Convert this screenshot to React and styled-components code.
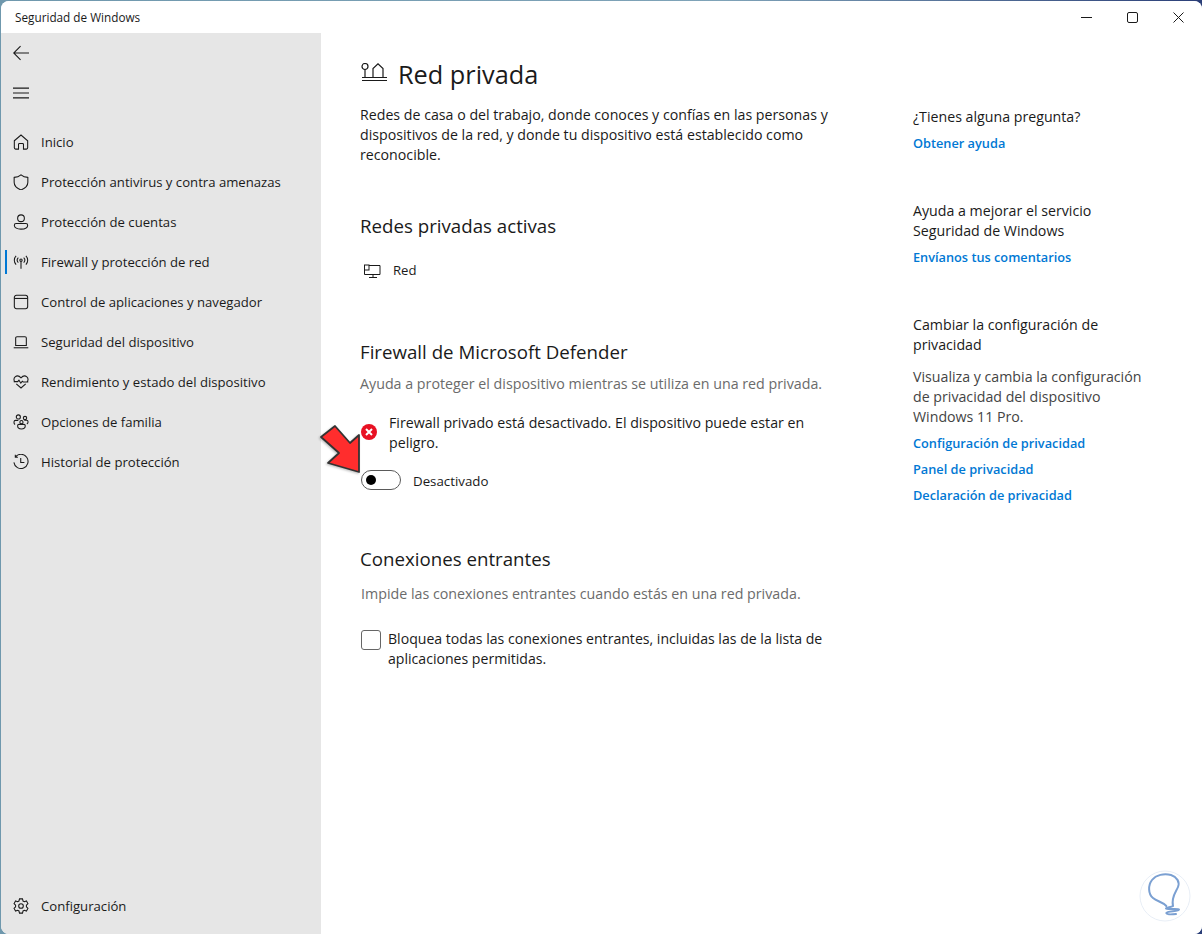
import React from 'react';
import styled, { createGlobalStyle } from 'styled-components';

const GlobalStyle = createGlobalStyle`
    html, body {
        margin: 0;
        padding: 0;
        width: 1202px;
        height: 934px;
        overflow: hidden;
        background: linear-gradient(90deg, #6f98ad 0%, #7fa3b8 60%, #2b3f78 100%);
    }
    * {
        box-sizing: border-box;
    }
`;

const FONT = `"Open Sans", "Noto Sans", "Liberation Sans", sans-serif`;

const navItems = [
    { label: 'Inicio', icon: 'home' },
    { label: 'Protección antivirus y contra amenazas', icon: 'shield' },
    { label: 'Protección de cuentas', icon: 'user' },
    { label: 'Firewall y protección de red', icon: 'antenna', active: true },
    { label: 'Control de aplicaciones y navegador', icon: 'browser' },
    { label: 'Seguridad del dispositivo', icon: 'laptop' },
    { label: 'Rendimiento y estado del dispositivo', icon: 'heart' },
    { label: 'Opciones de familia', icon: 'family' },
    { label: 'Historial de protección', icon: 'history' },
];

const iconPaths = {
    home: (
        <path d="M1.5 7.6 9 1.2l7.5 6.4v8a1.4 1.4 0 0 1-1.4 1.4h-3.3v-5.300a1 1 0 0 0-1-1H7.200a1 1 0 0 0-1 1V17H2.900a1.400 1.400 0 0 1-1.400-1.400z" />
    ),
    shield: (
        <path d="M9 .9c2.200 1.800 4.700 2.700 7.700 2.900v5.500c0 4-2.500 6.700-7.700 8.600-5.200-1.900-7.700-4.600-7.700-8.600V3.800C4.300 3.600 6.800 2.700 9 .9z" />
    ),
    user: (
        <>
            <circle cx="9" cy="4.800" r="3.800" />
            <path d="M1.500 12.600c0-1.100.9-1.900 2-1.900h11c1.100 0 2 .8 2 1.900 0 3-3.200 4.400-7.500 4.400s-7.500-1.400-7.500-4.400z" />
        </>
    ),
    antenna: (
        <>
            <circle cx="9" cy="7" r="1.300" />
            <path d="M9 8.300V16.500M6 4.200a4 4 0 0 0 0 5.600M12 4.200a4 4 0 0 1 0 5.600M3.500 2a7.200 7.200 0 0 0 0 10M14.500 2a7.200 7.200 0 0 1 0 10" />
        </>
    ),
    browser: (
        <>
            <rect x="1.500" y="1.500" width="15" height="15" rx="2.500" />
            <path d="M1.500 5h15" />
        </>
    ),
    laptop: (
        <>
            <path d="M3 13V4.500A1.500 1.500 0 0 1 4.500 3h9A1.500 1.500 0 0 1 15 4.500V13z" />
            <path d="M.8 15.500h16.400" />
        </>
    ),
    heart: (
        <path d="M2.400 9.200C.6 7.400.7 4.600 2.400 3.200c1.900-1.500 4.600-1.100 6.600 1.100 2-2.200 4.700-2.600 6.600-1.100 1.700 1.400 1.800 4.200 0 6M.8 8.600h4.500l1.400-1.700 2.100 3.400 1.700-2.200.9.800h5.800M3.700 11 9 15.700l5.300-4.700" />
    ),
    family: (
        <>
            <circle cx="6" cy="3.300" r="2.300" />
            <circle cx="13.500" cy="4.600" r="1.900" />
            <circle cx="9.500" cy="9.200" r="1.800" />
            <path d="M2.300 11.800C.5 10.500.7 7.200 2.800 7.200H6M15.600 11.200c2-1.200 1.700-4.100-.3-4.100h-2.600M5.200 13.200c0-1 .7-1.500 1.500-1.500h5.600c.8 0 1.500.5 1.500 1.500 0 2.400-2.200 3.600-4.300 3.600s-4.300-1.200-4.300-3.600z" />
        </>
    ),
    history: (
        <>
            <path d="M2.800 3.200A8 8 0 1 1 1 9.500M2.600.8v2.800h2.900" />
            <path d="M8.700 4.500v5.100h4.100" />
        </>
    ),
    gear: (
        <>
            <circle cx="9" cy="9" r="2.600" />
            <path d="M7.300 1h3.400l.6 2.400 1.500.8 2.300-.8 1.700 2.900-1.700 1.800v1.800l1.700 1.800-1.700 2.900-2.300-.8-1.500.8-.6 2.400H7.300l-.6-2.400-1.500-.8-2.300.8-1.700-2.900 1.700-1.800V8.100L1.200 6.300 2.900 3.400l2.300.8 1.500-.8z" />
        </>
    ),
};

const Icon = ({ name }) => (
    <NavIcon viewBox="0 0 18 18">{iconPaths[name]}</NavIcon>
);

const App = () => {
    return (
        <>
            <GlobalStyle />
            <Window>
                <TitleBar>
                    <TitleText>Seguridad de Windows</TitleText>
                    <WindowButtons>
                        <CaptionIcon viewBox="0 0 11 11"><path d="M0 5.500h11" /></CaptionIcon>
                        <CaptionIcon viewBox="0 0 11 11"><rect x=".5" y=".5" width="10" height="10" rx="1.500" /></CaptionIcon>
                        <CaptionIcon viewBox="0 0 11 11"><path d="M.5.5l10 10M10.500.5l-10 10" /></CaptionIcon>
                    </WindowButtons>
                </TitleBar>
                <Body>
                    <Sidebar>
                        <TopButton>
                            <NavIcon viewBox="0 0 18 18"><path d="M18 9H.8M8.500 1.300.8 9l7.700 7.700" /></NavIcon>
                        </TopButton>
                        <MenuButton>
                            <NavIcon viewBox="0 0 18 18"><path d="M0 3.500h18M0 9h18M0 14.500h18" /></NavIcon>
                        </MenuButton>
                        <NavList>
                            {navItems.map((item) => (
                                <NavItem key={item.label} $active={item.active}>
                                    <Icon name={item.icon} />
                                    <NavLabel>{item.label}</NavLabel>
                                </NavItem>
                            ))}
                        </NavList>
                        <SidebarFooter>
                            <NavItem>
                                <Icon name="gear" />
                                <NavLabel>Configuración</NavLabel>
                            </NavItem>
                        </SidebarFooter>
                    </Sidebar>

                    <Main>
                        <Content>
                            <PageHeader>
                                <HeaderIcon viewBox="0 0 27 22">
                                    <circle cx="5" cy="3.500" r="3" />
                                    <path d="M5 6.500V14.500M13 14.500V5.500L18 .8 23 5.500V14.500M2 14.500h25M2 17.500h25" />
                                </HeaderIcon>
                                <PageTitle>Red privada</PageTitle>
                            </PageHeader>
                            <Paragraph>
                                Redes de casa o del trabajo, donde conoces y confías en las personas y dispositivos de la red, y donde tu dispositivo está establecido como reconocible.
                            </Paragraph>

                            <ActiveSection>
                                <SectionTitle>Redes privadas activas</SectionTitle>
                                <NetworkRow>
                                    <NetworkIcon viewBox="0 0 18 16">
                                        <path d="M6 3.500h11v9H4M1.500 8v4.500H4M10 12.500v3M6 15.500h8" />
                                        <rect x="1.500" y="3" width="4.500" height="5" />
                                    </NetworkIcon>
                                    <NetworkName>Red</NetworkName>
                                </NetworkRow>
                            </ActiveSection>

                            <FirewallSection>
                                <SectionTitle>Firewall de Microsoft Defender</SectionTitle>
                                <Hint>Ayuda a proteger el dispositivo mientras se utiliza en una red privada.</Hint>
                                <AlertRow>
                                    <AlertIcon viewBox="0 0 16 16">
                                        <circle cx="8" cy="8" r="8" fill="#e81123" />
                                        <path d="M5 5l6 6M11 5l-6 6" stroke="#fff" strokeWidth="2" />
                                    </AlertIcon>
                                    <AlertText>Firewall privado está desactivado. El dispositivo puede estar en peligro.</AlertText>
                                </AlertRow>
                                <ToggleRow>
                                    <Toggle><ToggleKnob /></Toggle>
                                    <ToggleLabel>Desactivado</ToggleLabel>
                                    <Arrow viewBox="0 0 42 50">
                                        <path d="M1 13 15 2 30 19 39 11 39 48 8 39 19 29 Z" fill="#ff2d2d" stroke="#333" strokeWidth="1.800" strokeLinejoin="round" />
                                    </Arrow>
                                </ToggleRow>
                            </FirewallSection>

                            <IncomingSection>
                                <SectionTitle>Conexiones entrantes</SectionTitle>
                                <IncomingHint>Impide las conexiones entrantes cuando estás en una red privada.</IncomingHint>
                                <CheckRow>
                                    <CheckBox />
                                    <CheckText>Bloquea todas las conexiones entrantes, incluidas las de la lista de aplicaciones permitidas.</CheckText>
                                </CheckRow>
                            </IncomingSection>
                        </Content>

                        <Aside>
                            <AsideBlock>
                                <AsideText>¿Tienes alguna pregunta?</AsideText>
                                <AsideLink>Obtener ayuda</AsideLink>
                            </AsideBlock>
                            <AsideBlock>
                                <AsideText>Ayuda a mejorar el servicio Seguridad de Windows</AsideText>
                                <AsideLink>Envíanos tus comentarios</AsideLink>
                            </AsideBlock>
                            <AsideBlock>
                                <AsideText>Cambiar la configuración de privacidad</AsideText>
                                <AsideNote>Visualiza y cambia la configuración de privacidad del dispositivo Windows 11 Pro.</AsideNote>
                                <AsideLink>Configuración de privacidad</AsideLink>
                                <AsideLink>Panel de privacidad</AsideLink>
                                <AsideLink>Declaración de privacidad</AsideLink>
                            </AsideBlock>
                        </Aside>

                        <Watermark viewBox="0 0 52 52">
                            <circle cx="26" cy="26" r="25" fill="none" stroke="#e8eef6" strokeWidth="1" />
                            <path d="M27.300 36C24 32 18 31.500 14 28 9 24 9 15 13 10 17 5 25 3 32 5 38 7 41 12 39 17 37 22 32 27 34 36 32 37.500 27 37 27 38.500 28 40 39 38 40 39.500 40 41.500 28 41 27.300 43 28 45 33 44.500 37 44" fill="none" stroke="#7ba0d2" strokeWidth="2" strokeLinecap="round" />
                        </Watermark>
                    </Main>
                </Body>
            </Window>
        </>
    );
};

export default App;

const Window = styled.div`
    position: relative;
    display: flex;
    flex-direction: column;
    width: 1201px;
    height: 933px;
    margin: 1px 0 0 1px;
    overflow: hidden;
    border-radius: 8px;
    background: #fff;
    font-family: ${FONT};
    color: #1a1a1a;
`;

const TitleBar = styled.div`
    display: flex;
    flex: none;
    align-items: center;
    justify-content: space-between;
    height: 32px;
    padding-left: 14px;
    background: #fff;
`;

const TitleText = styled.span`
    font-size: 11.75px;
    color: #1a1a1a;
`;

const WindowButtons = styled.div`
    display: flex;
    gap: 35px;
    align-items: center;
    padding-right: 18px;
`;

const CaptionIcon = styled.svg`
    width: 11px;
    height: 11px;
    fill: none;
    stroke: #1a1a1a;
    stroke-width: 1;
`;

const Body = styled.div`
    display: flex;
    flex: 1;
    min-height: 0;
`;

const Sidebar = styled.nav`
    display: flex;
    flex: none;
    flex-direction: column;
    width: 320px;
    background: #e6e6e6;
`;

const TopButton = styled.div`
    display: flex;
    align-items: center;
    height: 40px;
    padding-left: 12px;
`;

const MenuButton = styled(TopButton)`
    margin-bottom: 9px;
`;

const NavList = styled.div`
    display: flex;
    flex-direction: column;
`;

const NavItem = styled.div`
    position: relative;
    display: flex;
    gap: 12px;
    align-items: center;
    height: 40px;
    padding-left: 12px;

    ${(p) => p.$active && `
        &::before {
            content: '';
            position: absolute;
            left: 4px;
            top: 8px;
            width: 2px;
            height: 24px;
            background: #0078d4;
        }
    `}
`;

const NavIcon = styled.svg`
    flex: none;
    width: 16px;
    height: 16px;
    fill: none;
    stroke: #1a1a1a;
    stroke-width: 1.2;
`;

const NavLabel = styled.span`
    font-size: 13.15px;
    color: #1a1a1a;
    white-space: nowrap;
`;

const SidebarFooter = styled.div`
    margin-top: auto;
    padding-bottom: 8px;
`;

const Main = styled.main`
    position: relative;
    display: flex;
    flex: 1;
    padding: 21px 0 0 39px;
    background: #fff;
`;

const Content = styled.div`
    width: 480px;
    flex: none;
`;

const PageHeader = styled.div`
    display: flex;
    gap: 11px;
    align-items: center;
    height: 40px;
    margin-bottom: 11px;
`;

const HeaderIcon = styled.svg`
    width: 27px;
    height: 22px;
    fill: none;
    stroke: #1a1a1a;
    stroke-width: 1.2;
`;

const PageTitle = styled.h1`
    margin: 0;
    font-size: 25.3px;
    font-weight: 400;
    color: #1a1a1a;
`;

const Paragraph = styled.p`
    margin: 0;
    font-size: 14.2px;
    line-height: 20px;
    color: #1a1a1a;
`;

const ActiveSection = styled.section`
    margin-top: 47px;
`;

const SectionTitle = styled.h2`
    margin: 0;
    font-size: 18.7px;
    line-height: 28px;
    font-weight: 400;
    color: #1a1a1a;
`;

const NetworkRow = styled.div`
    display: flex;
    gap: 12px;
    align-items: center;
    height: 20px;
    margin-top: 20px;
    padding-left: 3px;
`;

const NetworkIcon = styled.svg`
    width: 18px;
    height: 16px;
    fill: none;
    stroke: #1a1a1a;
    stroke-width: 1;
`;

const NetworkName = styled.span`
    font-size: 13.15px;
`;

const FirewallSection = styled.section`
    margin-top: 58px;
`;

const Hint = styled.p`
    margin: 8px 0 0;
    font-size: 14.25px;
    line-height: 20px;
    color: #6b6b6b;
`;

const AlertRow = styled.div`
    display: flex;
    gap: 12px;
    margin-top: 19px;
`;

const AlertIcon = styled.svg`
    flex: none;
    width: 16px;
    height: 16px;
    margin: 11px 0 0 1px;
`;

const AlertText = styled.p`
    margin: 0;
    font-size: 14.2px;
    line-height: 20px;
`;

const ToggleRow = styled.div`
    position: relative;
    display: flex;
    gap: 12px;
    align-items: center;
    height: 22px;
    margin-top: 16px;
    padding-left: 1px;
`;

const Toggle = styled.div`
    display: flex;
    align-items: center;
    width: 40px;
    height: 20px;
    padding-left: 4px;
    border: 1px solid #5a5a5a;
    border-radius: 10px;
    background: #fff;
`;

const ToggleKnob = styled.div`
    width: 10px;
    height: 10px;
    border-radius: 50%;
    background: #000;
`;

const ToggleLabel = styled.span`
    font-size: 13.3px;
    padding-top: 2px;
`;

const Arrow = styled.svg`
    position: absolute;
    left: -40px;
    top: -45px;
    width: 42px;
    height: 50px;
    filter: drop-shadow(-1px 1px 1px rgba(0, 0, 0, 0.25));
`;

const IncomingSection = styled.section`
    margin-top: 54px;
`;

const IncomingHint = styled(Hint)`
    margin-top: 11px;
    padding-left: 1px;
`;

const CheckRow = styled.div`
    display: flex;
    gap: 7px;
    margin-top: 25px;
    padding-left: 1px;
`;

const CheckBox = styled.div`
    flex: none;
    width: 20px;
    height: 20px;
    margin-top: 1px;
    border: 1px solid #666;
    border-radius: 3px;
    background: #fff;
`;

const CheckText = styled(AlertText)`
    font-size: 14.1px;
`;

const Aside = styled.aside`
    display: flex;
    flex-direction: column;
    gap: 45px;
    width: 235px;
    margin-left: 73px;
    padding-top: 53px;
`;

const AsideBlock = styled.div`
    display: flex;
    flex-direction: column;
`;

const AsideText = styled.div`
    font-size: 14.2px;
    line-height: 20px;
    margin-bottom: 3px;
`;

const AsideNote = styled.div`
    font-size: 14.2px;
    line-height: 20px;
    color: #444;
    margin: 9px 0 3px;
`;

const AsideLink = styled.a`
    font-size: 12.75px;
    font-weight: 600;
    line-height: 26px;
    color: #0078d4;
    white-space: nowrap;
`;

const Watermark = styled.svg`
    position: absolute;
    right: 11px;
    bottom: 12px;
    width: 52px;
    height: 52px;
`;
